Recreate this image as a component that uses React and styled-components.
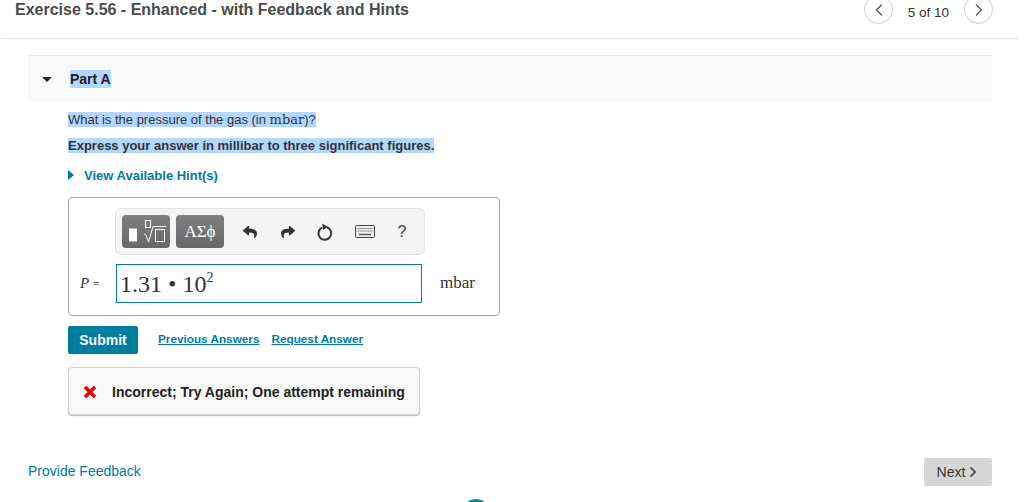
import React from 'react';
import styled, { createGlobalStyle } from 'styled-components';
import { ChevronLeft, ChevronRight } from 'lucide-react';
import { FaReply, FaShare, FaChevronRight } from 'react-icons/fa';

const GlobalStyle = createGlobalStyle`
  html, body {
    margin: 0;
    padding: 0;
    background: #fff;
    overflow: hidden;
  }
  body {
    font-family: "Liberation Sans", Arial, sans-serif;
  }
`;

const TEAL = '#007c9f';

const Page = styled.div`
  position: relative;
  width: 1028px;
  height: 502px;
  overflow: hidden;
`;

const Header = styled.header`
  display: flex;
  justify-content: space-between;
  width: 1016px;
  height: 38px;
  margin-left: 2px;
  border-bottom: 1px solid #e2e2e2;
`;

const Title = styled.h1`
  margin: 0 0 0 13px;
  font-size: 16px;
  line-height: 19px;
  font-weight: 700;
  color: #4b4b4b;
`;

const Pager = styled.div`
  display: flex;
  align-items: flex-start;
  margin-right: 25px;
  margin-top: -5px;
`;

const NavCircle = styled.span`
  display: flex;
  align-items: center;
  justify-content: center;
  width: 27px;
  height: 27px;
  border: 1px solid #cfcfcf;
  border-radius: 50%;
  color: #555;
`;

const PagerText = styled.span`
  width: 71px;
  padding-top: 10px;
  text-align: center;
  font-size: 13.5px;
  line-height: 15px;
  color: #333;
`;

const Part = styled.section`
  margin: 16px 0 0 28px;
  width: 964px;
`;

const PartBar = styled.div`
  display: flex;
  align-items: center;
  height: 46px;
  background: #f9f9f9;
  border-top: 1px solid #e6e6e6;
`;

const DownTriangle = styled.span`
  width: 0;
  height: 0;
  margin-left: 14px;
  margin-right: 18px;
  border-left: 5px solid transparent;
  border-right: 5px solid transparent;
  border-top: 5px solid #222;
`;

const Selected = styled.span`
  background: #b3d7ff;
`;

const PartName = styled(Selected)`
  font-size: 14px;
  line-height: 18px;
  font-weight: 700;
  color: #222;
`;

const Body = styled.div`
  padding: 10px 0 0 40px;
`;

const Question = styled.p`
  margin: 0;
  font-size: 13px;
  line-height: 16px;
  color: #333;
`;

const Mono = styled.span`
  font-family: "DejaVu Serif", "Liberation Serif", serif;
  font-size: 13px;
`;

const Instruction = styled.p`
  margin: 10px 0 0;
  font-size: 13px;
  line-height: 16px;
  font-weight: 700;
  color: #333;
`;

const HintRow = styled.div`
  display: flex;
  align-items: center;
  margin-top: 13px;
  height: 16px;
  font-size: 13px;
  font-weight: 700;
  color: ${TEAL};
`;

const RightTriangle = styled.span`
  width: 0;
  height: 0;
  margin-right: 10px;
  border-top: 5px solid transparent;
  border-bottom: 5px solid transparent;
  border-left: 6px solid ${TEAL};
`;

const AnswerBox = styled.div`
  box-sizing: border-box;
  width: 432px;
  height: 119px;
  margin-top: 14px;
  padding: 10px 0 0 46px;
  border: 1px solid #aaa;
  border-radius: 4px;
`;

const Toolbar = styled.div`
  box-sizing: border-box;
  display: flex;
  align-items: center;
  width: 310px;
  height: 47px;
  padding-left: 6px;
  background: #f4f4f4;
  border: 1px solid #e2e2e2;
  border-radius: 6px;
`;

const TemplateButton = styled.span`
  box-sizing: border-box;
  display: flex;
  flex: 0 0 auto;
  align-items: center;
  justify-content: center;
  width: 48px;
  height: 33px;
  margin-right: 6px;
  border-radius: 4px;
  background: linear-gradient(#808080, #686868);
  color: #fff;
  font-family: "Liberation Serif", serif;
  font-size: 17px;
`;

const ToolIcon = styled.span`
  display: flex;
  align-items: center;
  justify-content: center;
  flex: 0 0 auto;
  width: ${p => p.$w}px;
  color: #333;
`;

const Help = styled.span`
  font-size: 16px;
  color: #444;
`;

const InputRow = styled.div`
  display: flex;
  align-items: center;
  margin: 9px 0 0 -35px;
`;

const VarLabel = styled.span`
  width: 36px;
  font-family: "Liberation Serif", serif;
  font-size: 14px;
  color: #333;

  i {
    font-size: 15px;
  }

  small {
    font-size: 12px;
  }
`;

const MathInput = styled.div`
  box-sizing: border-box;
  width: 306px;
  height: 39px;
  padding: 4px 0 0 3px;
  border: 1px solid #0f7a9c;
  font-family: "Liberation Serif", serif;
  font-size: 24px;
  line-height: 30px;
  color: #333;

  sup {
    font-size: 14px;
    line-height: 0;
    vertical-align: 10px;
  }
`;

const Unit = styled.span`
  margin: -2px 0 0 18px;
  font-family: "Liberation Serif", "DejaVu Serif", serif;
  font-size: 17px;
  color: #333;
`;

const ActionRow = styled.div`
  display: flex;
  align-items: flex-start;
  margin-top: 10px;
`;

const SubmitButton = styled.button`
  width: 70px;
  height: 28px;
  padding: 0;
  border: none;
  border-radius: 2px;
  background: ${TEAL};
  color: #fff;
  font-family: inherit;
  font-size: 14px;
  font-weight: 700;
`;

const TextLink = styled.a`
  margin-left: ${p => p.$gap}px;
  padding-top: 5px;
  font-size: 11.75px;
  line-height: 15px;
  font-weight: 700;
  color: ${TEAL};
  text-decoration: underline;
`;

const Feedback = styled.div`
  box-sizing: border-box;
  display: flex;
  align-items: center;
  width: 352px;
  height: 48px;
  margin-top: 13px;
  padding: 2px 0 0 14px;
  background: #f9f9f9;
  border: 1px solid #d4d4d4;
  border-radius: 4px;
  box-shadow: 0 1px 1px #bbb;
  font-size: 14px;
  font-weight: 700;
  color: #222;
`;

const CrossIcon = styled.svg`
  flex: 0 0 auto;
  margin-right: 15px;
`;

const Footer = styled.footer`
  display: flex;
  justify-content: space-between;
  align-items: center;
  margin-top: 43px;
`;

const FeedbackLink = styled.a`
  padding-bottom: 2px;
  font-size: 14px;
  color: ${TEAL};
`;

const NextButton = styled.span`
  display: flex;
  align-items: center;
  justify-content: center;
  gap: 2px;
  width: 68px;
  height: 28px;
  border-radius: 2px;
  background: #d6d6d6;
  font-size: 14px;
  color: #333;

  svg {
    color: #555;
  }
`;

const PeekingDot = styled.span`
  position: absolute;
  left: 461px;
  top: 499px;
  width: 30px;
  height: 30px;
  border-radius: 50%;
  background: #0a86ad;
`;

const SqrtIcon = () => (
  <svg width="42" height="28" viewBox="0 0 42 28" fill="none">
    <rect x="4" y="10.5" width="8" height="13" fill="#fff" />
    <rect x="20.5" y="2.5" width="5" height="7" stroke="#fff" />
    <path d="M19 16l2 1 2.5 7 4.5-15.5h13" stroke="#fff" />
    <rect x="30.5" y="11.5" width="9" height="12" stroke="#fff" />
  </svg>
);

const ResetIcon = () => (
  <svg width="18" height="18" viewBox="0 0 18 18" fill="none">
    <path d="M6 4.6A6.4 6.4 0 1 0 11 4.3" stroke="#333" strokeWidth="2" />
    <path d="M6.2 0.5l5.8 3.4-5 3.2z" fill="#333" />
  </svg>
);

const KeyboardIcon = () => (
  <svg width="20" height="13" viewBox="0 0 20 13" fill="none">
    <rect x="0.5" y="0.5" width="19" height="12" rx="1" fill="#eee" stroke="#444" />
    <path d="M2.5 3.5h15M2.5 6h15" stroke="#555" strokeDasharray="1.2 0.8" />
    <path d="M4 9.5h12" stroke="#555" strokeWidth="1.4" />
  </svg>
);

const App = () => {
  return (
    <Page>
      <GlobalStyle />
      <Header>
        <Title>Exercise 5.56 - Enhanced - with Feedback and Hints</Title>
        <Pager>
          <NavCircle>
            <ChevronLeft size={20} strokeWidth={1.6} />
          </NavCircle>
          <PagerText>5 of 10</PagerText>
          <NavCircle>
            <ChevronRight size={20} strokeWidth={1.6} />
          </NavCircle>
        </Pager>
      </Header>
      <Part>
        <PartBar>
          <DownTriangle />
          <PartName>Part A</PartName>
        </PartBar>
        <Body>
          <Question>
            <Selected>
              What is the pressure of the gas (in <Mono>mbar</Mono>)?
            </Selected>
          </Question>
          <Instruction>
            <Selected>Express your answer in millibar to three significant figures.</Selected>
          </Instruction>
          <HintRow>
            <RightTriangle />
            View Available Hint(s)
          </HintRow>
          <AnswerBox>
            <Toolbar>
              <TemplateButton>
                <SqrtIcon />
              </TemplateButton>
              <TemplateButton>ΑΣϕ</TemplateButton>
              <ToolIcon $w={40}>
                <FaReply size={14} />
              </ToolIcon>
              <ToolIcon $w={36}>
                <FaShare size={14} />
              </ToolIcon>
              <ToolIcon $w={38}>
                <ResetIcon />
              </ToolIcon>
              <ToolIcon $w={42}>
                <KeyboardIcon />
              </ToolIcon>
              <ToolIcon $w={32}>
                <Help>?</Help>
              </ToolIcon>
            </Toolbar>
            <InputRow>
              <VarLabel>
                <i>P</i> <small>=</small>
              </VarLabel>
              <MathInput>
                1.31 • 10<sup>2</sup>
              </MathInput>
              <Unit>mbar</Unit>
            </InputRow>
          </AnswerBox>
          <ActionRow>
            <SubmitButton>Submit</SubmitButton>
            <TextLink $gap={20}>Previous Answers</TextLink>
            <TextLink $gap={12}>Request Answer</TextLink>
          </ActionRow>
          <Feedback>
            <CrossIcon width="14" height="14" viewBox="0 0 14 14">
              <path d="M2 2l10 10M12 2L2 12" stroke="#ee0000" strokeWidth="3.6" />
            </CrossIcon>
            Incorrect; Try Again; One attempt remaining
          </Feedback>
        </Body>
        <Footer>
          <FeedbackLink>Provide Feedback</FeedbackLink>
          <NextButton>
            Next
            <FaChevronRight size={12} />
          </NextButton>
        </Footer>
      </Part>
      <PeekingDot />
    </Page>
  );
};

export default App;
